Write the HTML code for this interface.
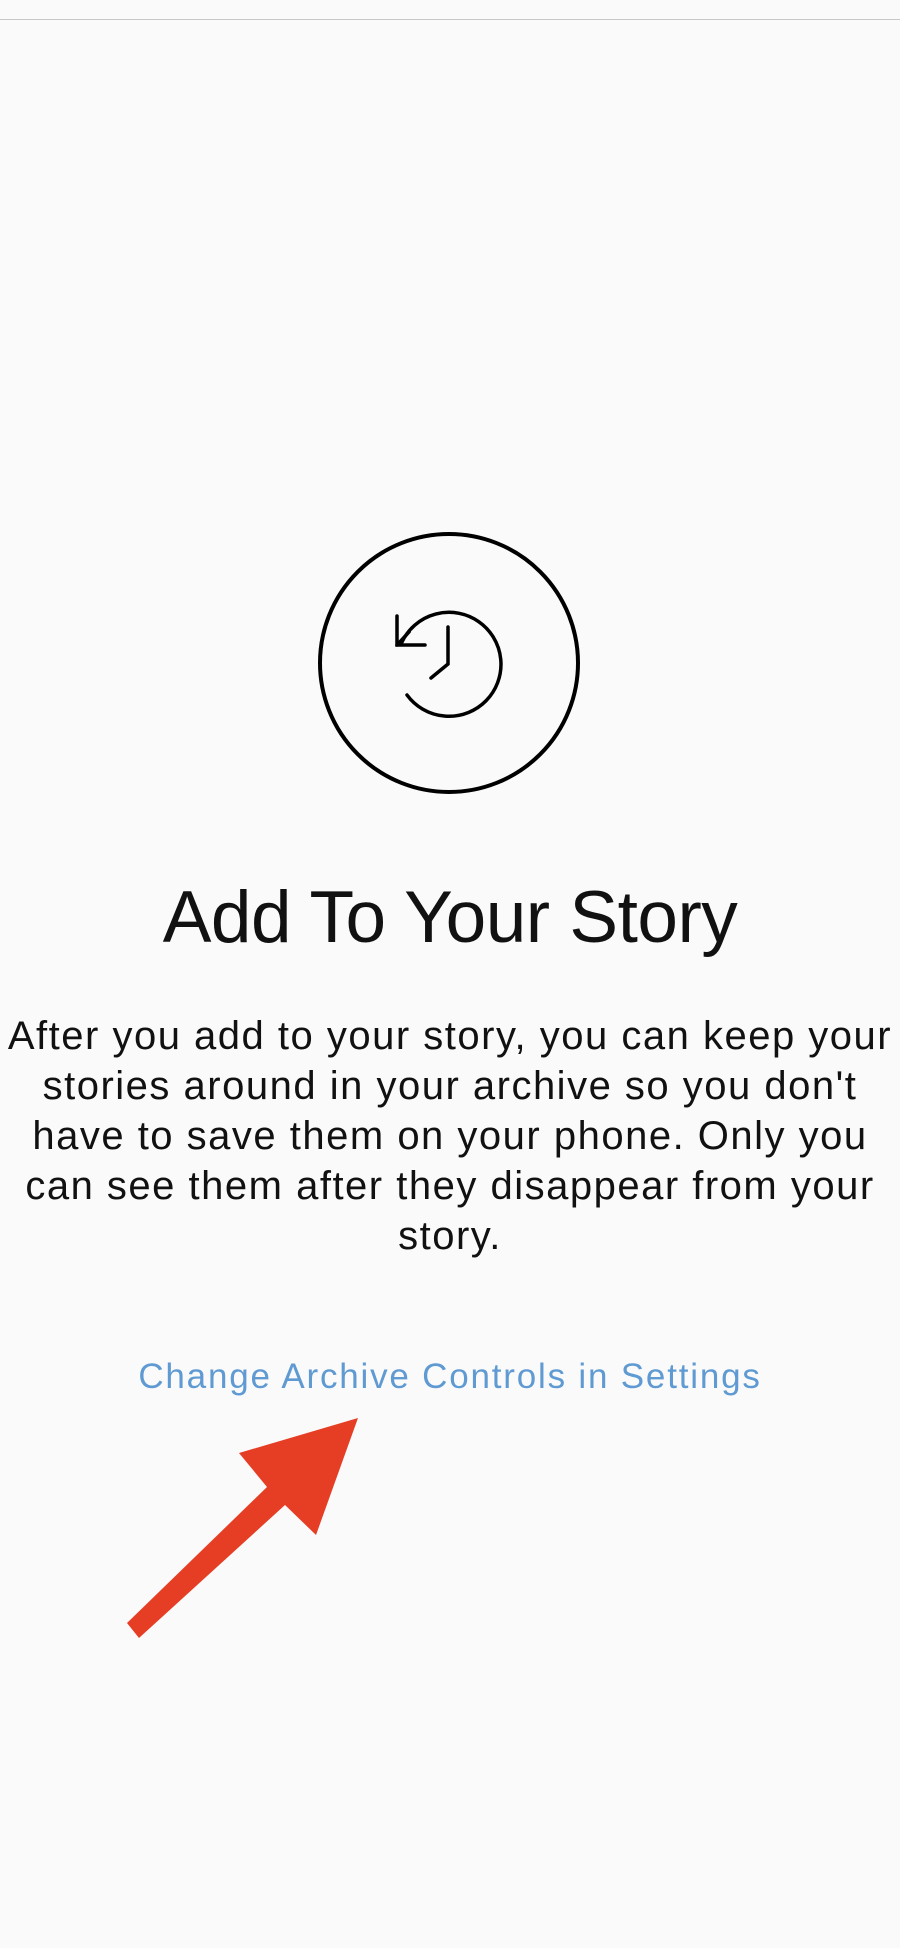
<!DOCTYPE html>
<html><head><meta charset="utf-8"><style>
html,body{margin:0;padding:0;}
body{width:900px;height:1948px;background:#fafafa;position:relative;overflow:hidden;font-family:"Liberation Sans",sans-serif;}
.top{position:absolute;top:19px;left:0;width:900px;height:1px;background:#c8c8c8;}
h1{position:absolute;top:876px;left:0;width:900px;text-align:center;margin:0;font-weight:400;font-size:73px;color:#111;letter-spacing:-0.5px;}
.body{position:absolute;top:1011px;left:-10px;width:920px;text-align:center;font-size:40px;line-height:50px;color:#111;letter-spacing:1.5px;}
.link{position:absolute;top:1357px;left:-10px;width:920px;text-align:center;font-size:35px;color:#5f9ad3;letter-spacing:1.8px;}
</style></head><body>
<div class="top"></div>
<svg style="position:absolute;left:0;top:0" width="900" height="1948">
<circle cx="449" cy="663" r="129" fill="none" stroke="#000" stroke-width="4"/>
<g fill="none" stroke="#000" stroke-width="3.5" stroke-linecap="round">
<path d="M407 695 A52 52 0 1 0 402 642"/>
<path d="M397 616 L397 645 L425 645"/>
<path d="M397 645 L409 632"/>
<path d="M448 627 L448 664 L431 678"/>
</g>
<polygon fill="#e63e25" points="127,1623 267,1487 239,1453 358,1418 316,1535 285,1505 139,1638"/>
</svg>
<h1>Add To Your Story</h1>
<div class="body">After you add to your story, you can keep your<br>stories around in your archive so you don't<br>have to save them on your phone. Only you<br>can see them after they disappear from your<br>story.</div>
<div class="link">Change Archive Controls in Settings</div>
</body></html>
